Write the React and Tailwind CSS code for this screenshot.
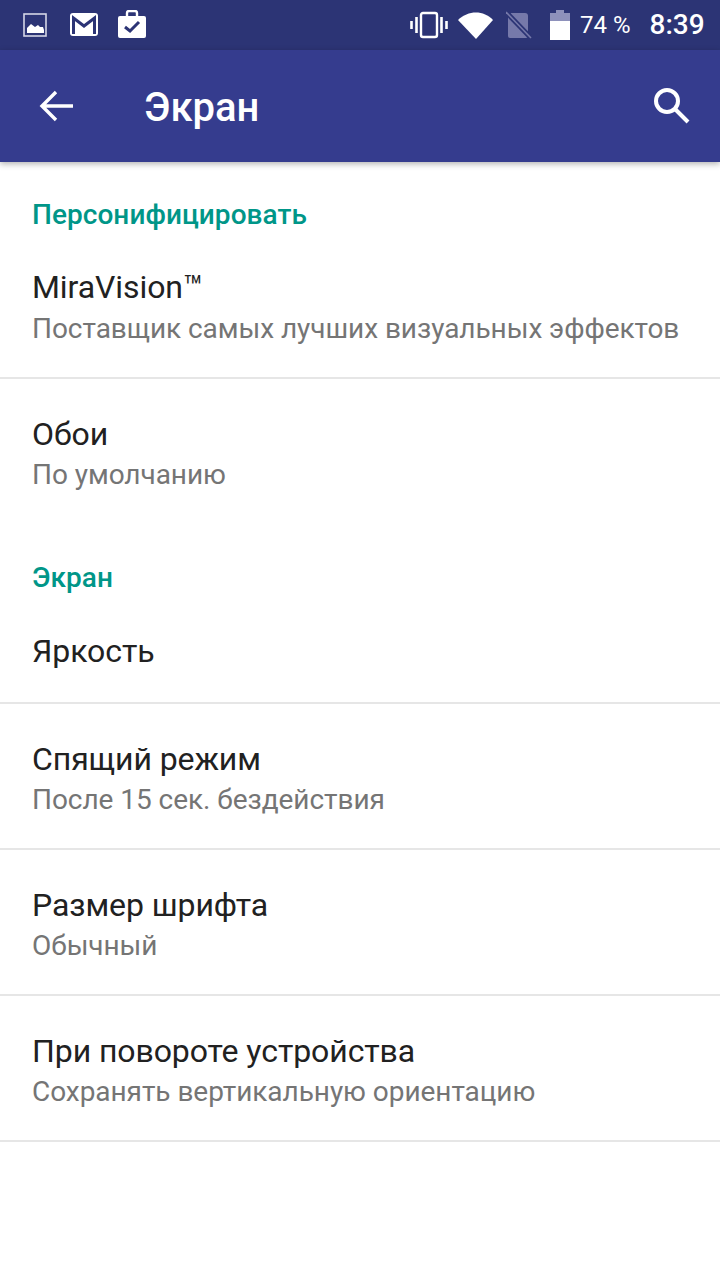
const font = { fontFamily: "Roboto, sans-serif" };

function Row({ title, summary, divider = true, first = false, className = "h-[146px]" }) {
  return (
    <div className={`px-8 ${first ? "pt-[34px]" : "pt-[35px]"} ${className} ${divider ? "border-b-2 border-[#e6e6e6]" : ""}`}>
      <div className="text-[32px] leading-[40px] tracking-[-0.08px] text-[#212121]">{title}</div>
      {summary && <div className={`${first ? "mt-[2px]" : "mt-[1px]"} text-[28px] leading-[40px] tracking-[-0.05px] text-[#757575]`}>{summary}</div>}
    </div>
  );
}

function Section({ children, className = "" }) {
  return <div className={`px-8 text-[28px] leading-[36px] tracking-[0.05px] font-medium text-[#009688] ${className}`}>{children}</div>;
}

export default function App() {
  return (
    <div className="w-[720px] h-[1280px] bg-white overflow-hidden flex flex-col" style={font}>
      {/* status bar */}
      <div className="h-[50px] bg-[#2c3475] flex items-center text-white shrink-0">
        <svg width="26" height="26" viewBox="0 0 26 26" className="ml-[23px]">
          <rect x="1" y="2" width="22" height="22" fill="none" stroke="#d5d6e6" strokeWidth="1.6" />
          <path d="M4 21v-5l4-4 4 3 3-2 2 2h3l1 3v3z" fill="#fff" />
        </svg>
        <svg width="28" height="24" viewBox="0 0 28 24" className="ml-[21px]">
          <rect x="0" y="0" width="28" height="23" rx="3" fill="#fff" />
          <path d="M3.5 21V5l10.5 8 10.5-8v16" fill="none" stroke="#2c3475" strokeWidth="3" />
        </svg>
        <svg width="30" height="28" viewBox="0 0 30 28" className="ml-[19px] mb-[3px]">
          <path d="M10 6V3a2 2 0 0 1 2-2h6a2 2 0 0 1 2 2v3" fill="none" stroke="#fff" strokeWidth="2.4" />
          <rect x="1" y="6" width="28" height="22" rx="2" fill="#fff" />
          <path d="M8 17l5 4 9-9" fill="none" stroke="#2c3475" strokeWidth="3" />
        </svg>
        <svg width="38" height="28" viewBox="0 0 38 28" className="ml-[263px]" fill="none" stroke="#fff">
          <rect x="11" y="2" width="16" height="24" rx="2" strokeWidth="2.4" />
          <path d="M6.5 6v16M1.5 10v8M31.5 6v16M36.5 10v8" strokeWidth="2.6" />
        </svg>
        <svg width="36" height="28" viewBox="0 0 36 28" className="ml-[10px]">
          <path d="M0 9C10-1 26-1 35 9L18 28z" fill="#fff" />
        </svg>
        <svg width="26" height="28" viewBox="0 0 26 28" className="ml-[12px]">
          <path d="M5 2h14a3 3 0 0 1 3 3v20a2 2 0 0 1-2 2H4a2 2 0 0 1-2-2V6z" fill="#7679aa" />
          <path d="M0 1l25 26" stroke="#2c3475" strokeWidth="5" />
          <path d="M0 1l25 26" stroke="#7679aa" strokeWidth="1.6" />
        </svg>
        <svg width="20" height="30" viewBox="0 0 20 30" className="ml-[18px]">
          <path d="M6 0h8v3h6v27H0V3h6z" fill="#fff" />
          <path d="M6 0h8v3h6v8H0V3h6z" fill="#8e91bb" />
        </svg>
        <span className="ml-[10px] text-[24px] leading-none">74 %</span>
        <span className="ml-[19px] text-[28px] leading-none font-medium">8:39</span>
      </div>

      {/* app bar */}
      <div className="h-[112px] bg-[#353c8e] flex items-center shrink-0 shadow-[0_2px_6px_rgba(0,0,0,0.3)] relative text-white">
        <svg width="36" height="32" viewBox="0 0 36 32" className="ml-[39px]" fill="none" stroke="#fff" strokeWidth="3.4">
          <path d="M34 16H3M17 2L3 16l14 14" />
        </svg>
        <h1 className="ml-[69px] mt-[4px] text-[40px] leading-none font-medium">Экран</h1>
        <svg width="38" height="38" viewBox="0 0 38 38" className="ml-auto mr-[29px]" fill="none" stroke="#fff" strokeWidth="4">
          <circle cx="14" cy="14" r="11" />
          <path d="M22 22l13 13" />
        </svg>
      </div>

      <Section className="mt-[35px]">Персонифицировать</Section>
      <Row title="MiraVision™" summary="Поставщик самых лучших визуальных эффектов" first />
      <Row title="Обои" summary="По умолчанию" divider={false} />
      <Section className="mt-[35px]">Экран</Section>
      <Row title="Яркость" className="h-[108px]" />
      <Row title="Спящий режим" summary="После 15 сек. бездействия" />
      <Row title="Размер шрифта" summary="Обычный" />
      <Row title="При повороте устройства" summary="Сохранять вертикальную ориентацию" />
    </div>
  );
}
